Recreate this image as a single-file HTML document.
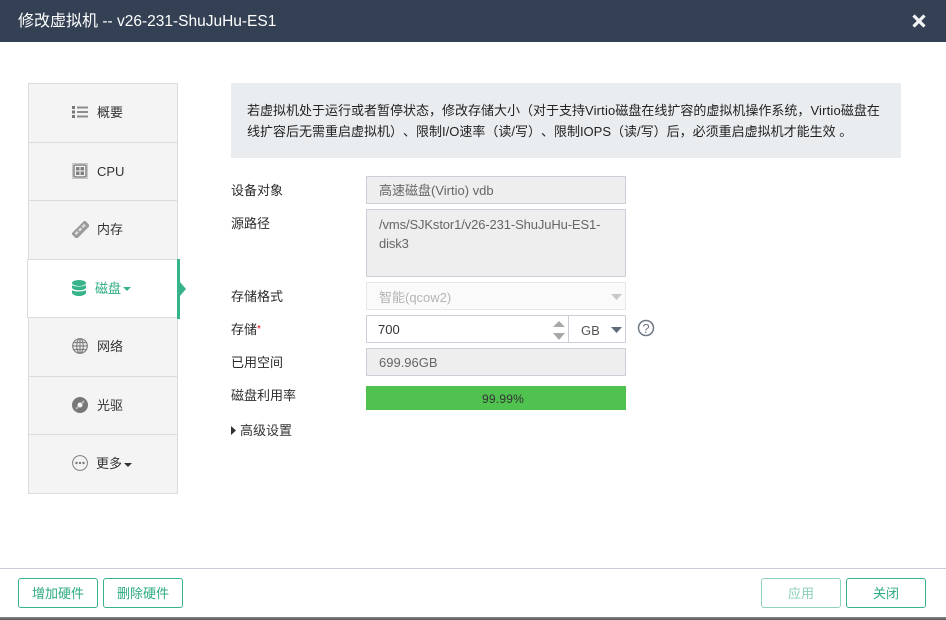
<!DOCTYPE html>
<html><head><meta charset="utf-8">
<style>
html,body{margin:0;padding:0;background:#fff}
#p{position:relative;width:946px;height:620px;overflow:hidden;background:#fff;font:13px/20px "Liberation Sans","WenQuanYi Zen Hei","Noto Sans CJK SC",sans-serif;color:#333;text-spacing-trim:space-all}
#p div,#p svg{position:absolute}
.t{white-space:nowrap}
.item{left:28px;width:148px;background:#f4f4f4;border:1px solid #dcdcdc}
.lbl{left:231px;white-space:nowrap;color:#2b2b2b}
.box{left:366px;width:258px;border:1px solid #cdcdd8;border-radius:1px;background:#eee;color:#666;padding:0}
.btn{height:28px;top:578px;border:1px solid #36b38a;border-radius:3px;text-align:center;line-height:29px;color:#2cab80;background:#fff;box-sizing:content-box}
.v{letter-spacing:.17px}
</style></head><body><div id="p">
<div style="left:0;top:0;width:946px;height:42px;background:#344154"></div>
<div class="t" style="left:18px;top:12px;color:#fff;font-size:16px;line-height:20px">修改虚拟机<span style="font-size:15.5px"> -- v26-231-ShuJuHu-ES1</span></div>
<svg style="left:911px;top:13px" width="16" height="16" viewBox="0 0 16 16"><path d="M2.5 2.5L13.500 13.500M13.500 2.500L2.500 13.500" stroke="#f2f3f5" stroke-width="3.2" fill="none"/></svg>

<div class="item" style="top:83px;height:58px"></div>
<div class="item" style="top:142px;height:57px"></div>
<div class="item" style="top:200px;height:58px"></div>
<div class="item" style="top:317px;height:58px"></div>
<div class="item" style="top:376px;height:57px"></div>
<div class="item" style="top:434px;height:58px"></div>
<div style="left:27px;top:259px;width:150px;height:57px;background:#fff;border-top:1px solid #dcdcdc;border-left:1px solid #dcdcdc;border-bottom:1px solid #dcdcdc;box-sizing:content-box"></div>
<div style="left:177px;top:259px;width:3px;height:60px;background:#36b38a"></div>
<svg style="left:180px;top:282px" width="6" height="14"><path d="M0 0L6 7L0 14Z" fill="#36b38a"/></svg>

<svg style="left:72px;top:105px" width="16" height="14"><g fill="#777"><rect x="0" y="1" width="3" height="3"/><rect x="0" y="5.500" width="3" height="3"/><rect x="0" y="10" width="3" height="3"/></g><g fill="#8c8c8c"><rect x="5" y="1.500" width="11" height="2"/><rect x="5" y="6" width="11" height="2"/><rect x="5" y="10.500" width="11" height="2"/></g></svg>
<div class="t" style="left:97px;top:103px">概要</div>

<svg style="left:72px;top:163px" width="16" height="16"><rect x=".5" y=".5" width="15" height="15" fill="none" stroke="#999" stroke-width="1" stroke-dasharray="1 1"/><rect x="2" y="2" width="12" height="12" rx="1" fill="#f4f4f4" stroke="#6f6f6f" stroke-width="1.3"/><g fill="#808080"><rect x="4" y="4" width="3.500" height="3.500"/><rect x="8.500" y="4" width="3.500" height="3.500"/><rect x="4" y="8.500" width="3.500" height="3.500"/><rect x="8.500" y="8.500" width="3.500" height="3.500"/></g></svg>
<div class="t" style="left:97px;top:162px">CPU</div>

<svg style="left:72px;top:221px" width="17" height="17"><g transform="rotate(-45 8.500 8.500)"><rect x="-1" y="5" width="19" height="7.500" fill="#9a9a9a"/><g fill="#ddd"><rect x="1.500" y="7" width="3.500" height="2.500"/><rect x="6.500" y="7" width="3.500" height="2.500"/><rect x="11.500" y="7" width="3.500" height="2.500"/></g></g></svg>
<div class="t" style="left:97px;top:220px">内存</div>

<svg style="left:72px;top:280px" width="14" height="17"><g fill="#36b38a"><ellipse cx="7" cy="3" rx="7" ry="3"/><path d="M0 5c1 2 12 2 14 0v3c-2 3-12 3-14 0z"/><path d="M0 10c1 2 12 2 14 0v3c-2 4-12 4-14 0z"/></g></svg>
<div class="t" style="left:95px;top:279px;color:#2cab80">磁盘</div>
<svg style="left:123px;top:287px" width="8" height="4"><path d="M0 0H8L4 4Z" fill="#36b38a"/></svg>

<svg style="left:72px;top:338px" width="16" height="16" fill="none" stroke="#808080" stroke-width="1.2"><circle cx="8" cy="8" r="7.300"/><ellipse cx="8" cy="8" rx="3.300" ry="7.300"/><path d="M8 .7V15.300M.7 8H15.300M1.800 4.500H14.200M1.800 11.500H14.200"/></svg>
<div class="t" style="left:97px;top:337px">网络</div>

<svg style="left:72px;top:397px" width="16" height="16"><circle cx="8" cy="8" r="8" fill="#777"/><path d="M4 12L6 10M10 6L12 4" stroke="#b5b5b5" stroke-width="2" fill="none"/><circle cx="8" cy="8" r="2.500" fill="#f4f4f4"/></svg>
<div class="t" style="left:97px;top:396px">光驱</div>

<svg style="left:72px;top:455px" width="16" height="16"><circle cx="8" cy="8" r="7.400" fill="none" stroke="#808080" stroke-width="1"/><g fill="#777"><circle cx="4.500" cy="8" r="1.200"/><circle cx="8" cy="8" r="1.200"/><circle cx="11.500" cy="8" r="1.200"/></g></svg>
<div class="t" style="left:96px;top:454px">更多</div>
<svg style="left:124px;top:463px" width="8" height="4"><path d="M0 0H8L4 4Z" fill="#333"/></svg>

<div style="left:231px;top:83px;width:670px;height:75px;background:#e9edf0"></div>
<div class="t" style="left:247px;top:100px;line-height:21px;color:#222">若虚拟机处于运行或者暂停状态，修改存储大小（对于支持<span class="v">Virtio</span>磁盘在线扩容的虚拟机操作系统，<span class="v">Virtio</span>磁盘在<br>线扩容后无需重启虚拟机）、限制I/O速率（读/写）、限制IOPS（读/写）后，必须重启虚拟机才能生效 。</div>

<div class="lbl" style="top:181px">设备对象</div>
<div class="box" style="top:176px;height:26px"></div>
<div class="t" style="left:379px;top:181px;color:#666">高速磁盘(Virtio) vdb</div>

<div class="lbl" style="top:214px">源路径</div>
<div class="box" style="top:209px;height:66px"></div>
<div class="t" style="left:379px;top:215px;line-height:19px;color:#666;letter-spacing:-.12px">/vms/SJKstor1/v26-231-ShuJuHu-ES1-<br>disk3</div>

<div class="lbl" style="top:287px">存储格式</div>
<div class="box" style="top:282px;height:26px;background:#fafafa;border-color:#e6e6ec"></div>
<div class="t" style="left:379px;top:288px;color:#b4b4b4">智能(qcow2)</div>
<svg style="left:611px;top:294px" width="11" height="6"><path d="M0 0H11L5.500 6Z" fill="#c8c8c8"/></svg>

<div class="lbl" style="top:320px">存储<span style="color:#e00;font-size:10px;position:relative;top:-2px">*</span></div>
<div class="box" style="top:315px;height:26px;background:#fff"></div>
<div style="left:568px;top:316px;width:1px;height:26px;background:#cdcdd8"></div>
<div class="t" style="left:378px;top:320px;color:#333">700</div>
<svg style="left:552px;top:320px" width="14" height="21"><path d="M1 7L7 1L13 7Z" fill="#a8a8a8"/><path d="M1 13H13L7 20Z" fill="#a8a8a8"/></svg>
<div class="t" style="left:581px;top:321px;color:#555">GB</div>
<svg style="left:611px;top:327px" width="11" height="6"><path d="M0 0H11L5.500 6Z" fill="#5f6b7a"/></svg>
<svg style="left:637px;top:319px" width="18" height="18"><circle cx="9" cy="9" r="7.500" fill="none" stroke="#6f7885" stroke-width="1.500"/><text x="9" y="13.800" font-family="Liberation Sans" font-size="13" text-anchor="middle" fill="#6f7885">?</text></svg>

<div class="lbl" style="top:353px">已用空间</div>
<div class="box" style="top:348px;height:26px"></div>
<div class="t" style="left:379px;top:353px;color:#666">699.96GB</div>

<div class="lbl" style="top:386px">磁盘利用率</div>
<div style="left:366px;top:386px;width:260px;height:24px;background:#50c24f"></div>
<div class="t" style="left:373px;top:389px;width:260px;text-align:center;font-size:12px;color:#333;letter-spacing:.2px">99.99%</div>

<svg style="left:231px;top:426px" width="5" height="9"><path d="M0 0L5 4.500L0 9Z" fill="#333"/></svg>
<div class="t" style="left:240px;top:421px">高级设置</div>

<div style="left:0;top:568px;width:946px;height:1px;background:#cbcbdc"></div>
<div class="btn" style="left:18px;width:78px">增加硬件</div>
<div class="btn" style="left:103px;width:78px">删除硬件</div>
<div class="btn" style="left:761px;width:78px;border-color:#8fd3bb;color:#86cfb4">应用</div>
<div class="btn" style="left:846px;width:78px">关闭</div>
<div style="left:0;top:617px;width:946px;height:3px;background:linear-gradient(#8a8a8a,#555)"></div>
</div></body></html>
